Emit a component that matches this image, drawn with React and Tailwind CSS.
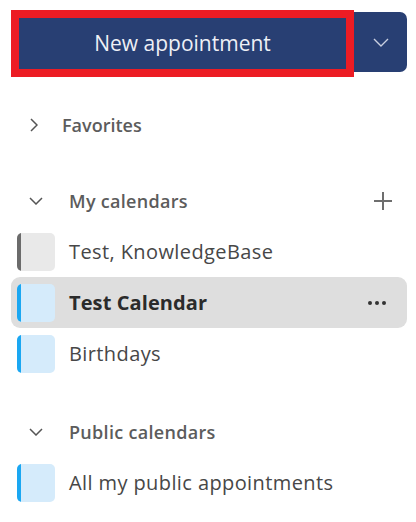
import React from 'react';

const font = { fontFamily: '"Open Sans", "Noto Sans", sans-serif' };

function Swatch({ edge, fill }) {
  return (
    <div className={`w-[38px] h-[38px] rounded-[5px] overflow-hidden flex ${fill}`}>
      <div className={`w-[4px] h-full ${edge}`} />
    </div>
  );
}

function CalendarRow({ name, edge, fill, active }) {
  return (
    <div
      className={`h-[51px] ml-[11px] mr-[9px] pl-[6px] pr-[20px] flex items-center rounded-[9px] ${
        active ? 'bg-[#dedede]' : ''
      }`}
    >
      <Swatch edge={edge} fill={fill} />
      <span
        className={`ml-[14px] text-[20px] flex-1 ${
          active ? 'font-bold text-[#2b2b2b] tracking-[0.1px]' : 'text-[#474747] tracking-[0.4px]'
        }`}
      >
        {name}
      </span>
      {active && (
        <svg width="20" height="6" viewBox="0 0 20 6" className="text-[#333]">
          <circle cx="3" cy="3" r="2" fill="currentColor" />
          <circle cx="10" cy="3" r="2" fill="currentColor" />
          <circle cx="17" cy="3" r="2" fill="currentColor" />
        </svg>
      )}
    </div>
  );
}

function ChevronDown({ className }) {
  return (
    <svg width="14" height="8" viewBox="0 0 14 8" className={className}>
      <path d="M1 1 L7 7 L13 1" fill="none" stroke="currentColor" strokeWidth="1.5" />
    </svg>
  );
}

function SectionHeader({ title, children }) {
  return (
    <div className="h-[40px] flex items-center pl-[29px] pr-[24px]">
      <ChevronDown className="text-[#555]" />
      <span className="ml-[26px] text-[18px] font-semibold tracking-[0.3px] text-[#5c5c5c] flex-1">
        {title}
      </span>
      {children}
    </div>
  );
}

export default function App() {
  return (
    <div className="w-[416px] h-[522px] bg-white overflow-hidden" style={font}>
      {/* Top buttons */}
      <div className="flex items-start pt-[10px] pl-[11px]">
        <div className="w-[343px] h-[67px] border-[8px] border-[#ec1c24] flex">
          <button className="flex-1 bg-[#283f73] text-[#eef0f6] text-[21px] font-medium">
            New appointment
          </button>
        </div>
        <button className="mt-[2px] w-[53px] h-[60px] bg-[#283f73] rounded-r-[7px] flex items-center justify-center">
          <svg width="16" height="9" viewBox="0 0 16 9" className="text-[#c9cfe0]">
            <path d="M1 1 L8 8 L15 1" fill="none" stroke="currentColor" strokeWidth="1.4" />
          </svg>
        </button>
      </div>

      {/* Favorites */}
      <div className="mt-[28px] h-[40px] flex items-center pl-[30px]">
        <svg width="8" height="14" viewBox="0 0 8 14" className="text-[#555]">
          <path d="M1 1 L7 7 L1 13" fill="none" stroke="currentColor" strokeWidth="1.5" />
        </svg>
        <span className="ml-[24px] text-[18px] font-semibold text-[#5c5c5c]">Favorites</span>
      </div>

      {/* My calendars */}
      <div className="mt-[36px]">
        <SectionHeader title="My calendars">
          <svg width="18" height="18" viewBox="0 0 18 18" className="text-[#6e6e6e]">
            <path d="M9 0 V18 M0 9 H18" stroke="currentColor" strokeWidth="2" />
          </svg>
        </SectionHeader>
      </div>
      <div className="mt-[5px]">
        <CalendarRow name="Test, KnowledgeBase" edge="bg-[#6b6b6b]" fill="bg-[#e9e9e9]" />
        <CalendarRow name="Test Calendar" edge="bg-[#1aa7f2]" fill="bg-[#d5ebfb]" active />
        <CalendarRow name="Birthdays" edge="bg-[#1aa7f2]" fill="bg-[#d5ebfb]" />
      </div>

      {/* Public calendars */}
      <div className="mt-[33px]">
        <SectionHeader title="Public calendars" />
      </div>
      <div className="mt-[5px]">
        <CalendarRow name="All my public appointments" edge="bg-[#1aa7f2]" fill="bg-[#d5ebfb]" />
      </div>
    </div>
  );
}
